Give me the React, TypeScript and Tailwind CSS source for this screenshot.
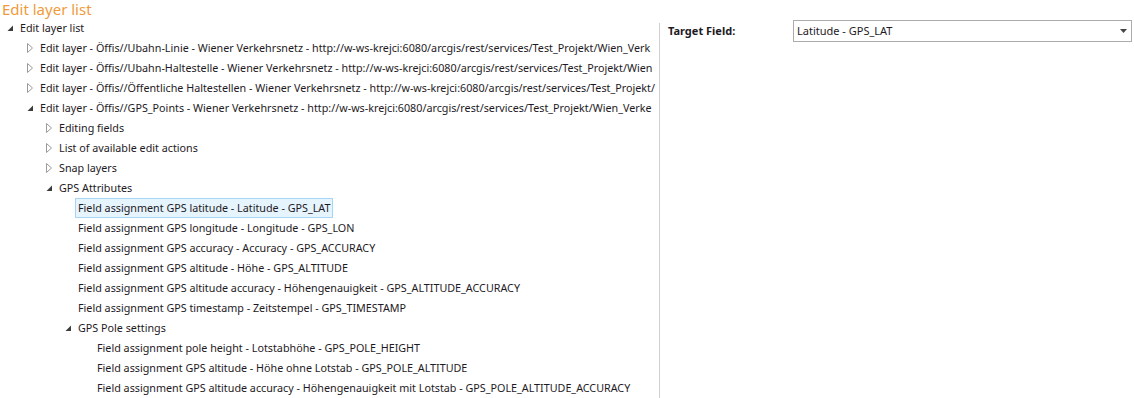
import React from 'react';

type Node = {
  label: string;
  depth: number;
  arrow?: 'open' | 'closed';
  selected?: boolean;
};

const rows: Node[] = [
  { label: 'Edit layer list', depth: 0, arrow: 'open' },
  { label: 'Edit layer - Öffis//Ubahn-Linie - Wiener Verkehrsnetz - http://w-ws-krejci:6080/arcgis/rest/services/Test_Projekt/Wien_Verk', depth: 1, arrow: 'closed' },
  { label: 'Edit layer - Öffis//Ubahn-Haltestelle - Wiener Verkehrsnetz - http://w-ws-krejci:6080/arcgis/rest/services/Test_Projekt/Wien', depth: 1, arrow: 'closed' },
  { label: 'Edit layer - Öffis//Öffentliche Haltestellen - Wiener Verkehrsnetz - http://w-ws-krejci:6080/arcgis/rest/services/Test_Projekt/', depth: 1, arrow: 'closed' },
  { label: 'Edit layer - Öffis//GPS_Points - Wiener Verkehrsnetz - http://w-ws-krejci:6080/arcgis/rest/services/Test_Projekt/Wien_Verke', depth: 1, arrow: 'open' },
  { label: 'Editing fields', depth: 2, arrow: 'closed' },
  { label: 'List of available edit actions', depth: 2, arrow: 'closed' },
  { label: 'Snap layers', depth: 2, arrow: 'closed' },
  { label: 'GPS Attributes', depth: 2, arrow: 'open' },
  { label: 'Field assignment GPS latitude - Latitude - GPS_LAT', depth: 3, selected: true },
  { label: 'Field assignment GPS longitude - Longitude - GPS_LON', depth: 3 },
  { label: 'Field assignment GPS accuracy - Accuracy - GPS_ACCURACY', depth: 3 },
  { label: 'Field assignment GPS altitude - Höhe - GPS_ALTITUDE', depth: 3 },
  { label: 'Field assignment GPS altitude accuracy - Höhengenauigkeit - GPS_ALTITUDE_ACCURACY', depth: 3 },
  { label: 'Field assignment GPS timestamp - Zeitstempel - GPS_TIMESTAMP', depth: 3 },
  { label: 'GPS Pole settings', depth: 3, arrow: 'open' },
  { label: 'Field assignment pole height - Lotstabhöhe - GPS_POLE_HEIGHT', depth: 4 },
  { label: 'Field assignment GPS altitude - Höhe ohne Lotstab - GPS_POLE_ALTITUDE', depth: 4 },
  { label: 'Field assignment GPS altitude accuracy - Höhengenauigkeit mit Lotstab - GPS_POLE_ALTITUDE_ACCURACY', depth: 4 },
];

// indent per tree depth, arrow sits in a 13px slot before the text
const indent = ['pl-[7px]', 'pl-[27px]', 'pl-[46px]', 'pl-[65px]', 'pl-[84px]'];

const Arrow = ({ kind }: { kind?: 'open' | 'closed' }) => {
  if (!kind) return <span className="w-[13px] shrink-0" />;
  return (
    <span className="w-[13px] shrink-0 flex items-center">
      {kind === 'open' ? (
        <svg width="7" height="7" viewBox="0 0 7 7">
          <path d="M6 0.5 L6 6 L0.5 6 Z" fill="#3c3c3c" />
        </svg>
      ) : (
        <svg width="7" height="10" viewBox="0 0 7 10">
          <path d="M0.5 0.5 L5.5 5 L0.5 9.5 Z" fill="none" stroke="#9a9a9a" strokeWidth="1" />
        </svg>
      )}
    </span>
  );
};

const TreeRow = ({ node }: { node: Node }) => (
  <div className={`h-5 flex items-center whitespace-nowrap ${indent[node.depth]}`}>
    <Arrow kind={node.arrow} />
    {node.selected ? (
      <span className="ml-[-3px] h-[20px] flex items-center px-[2px] border border-[#a5d6f6] bg-[#e6f4fd]">
        {node.label}
      </span>
    ) : (
      <span>{node.label}</span>
    )}
  </div>
);

const App = () => {
  return (
    <div
      className="w-[1134px] h-[398px] bg-white overflow-hidden text-[10.75px] text-[#1e1a24]"
      style={{ fontFamily: '"Noto Sans", "Open Sans", sans-serif' }}
    >
      <div className="h-[18px] pl-[2px] text-[15px] leading-[19px] text-[#ef9b3c]">Edit layer list</div>
      <div className="flex">
        <div className="w-[656px] shrink-0 overflow-hidden">
          {rows.map((r, i) => (
            <TreeRow key={i} node={r} />
          ))}
        </div>
        <div className="ml-[3px] mt-[5px] w-px h-[375px] bg-[#cfcfcf]" />
        <div className="flex-1 pl-2 pt-[2px] pr-[2px]">
          <div className="flex items-center h-[22px]">
            <div className="w-[125px] font-bold text-[11px]">Target Field:</div>
            <div className="flex-1 h-[22px] border border-[#acacac] flex items-center pl-[3px] pr-[4px] text-[11px]">
              <span className="flex-1">Latitude - GPS_LAT</span>
              <svg width="7" height="4" viewBox="0 0 7 4">
                <path d="M0 0 L7 0 L3.5 4 Z" fill="#444" />
              </svg>
            </div>
          </div>
        </div>
      </div>
    </div>
  );
};

export default App;
